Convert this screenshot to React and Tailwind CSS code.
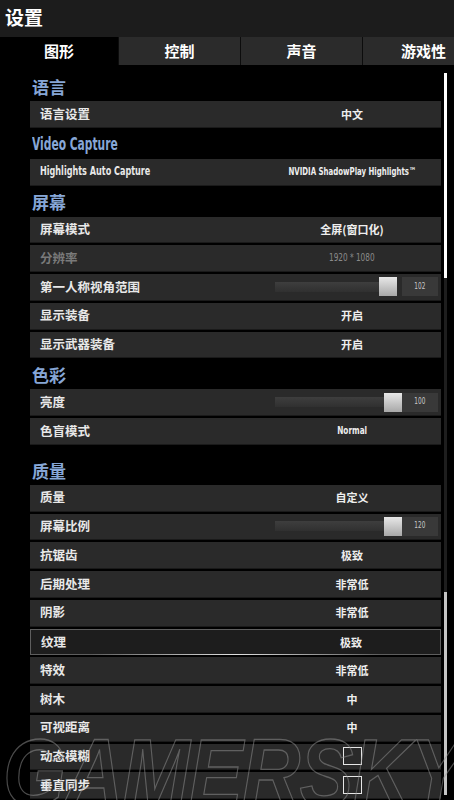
import React from "react";

const CJK = '"Noto Sans CJK SC", "Noto Sans", sans-serif';
const COND = '"Liberation Sans Narrow", "DejaVu Sans Condensed", "Roboto Condensed", "Noto Sans CJK SC", sans-serif';

function Heading({ children, tall, latin }) {
  return (
    <div
      className={`${tall ? "h-[38px] pt-[9px]" : "h-[29px]"} flex items-center pl-[2px] text-[17px] font-bold text-[#86a6d6]`}
      style={{ fontFamily: latin ? COND : CJK }}
    >
      <span className={latin ? "inline-block origin-left scale-x-[0.7] whitespace-nowrap" : ""}>{children}</span>
    </div>
  );
}

function Row({ label, children, dim, selected, latin }) {
  return (
    <div
      className={`relative mb-[2px] flex h-[26.75px] items-center ${
        selected
          ? "border border-[#5e5e5e] bg-[#1d1d1d]"
          : "border-b border-[#1a1a1a] bg-[#2a2a2a]"
      }`}
    >
      <div
        className={`flex-1 pl-[10px] text-[12.5px] font-bold ${dim ? "text-[#7a7a7a]" : "text-[#e8e8e8]"}`}
        style={{ fontFamily: latin ? COND : CJK }}
      >
        <span className={latin ? "inline-block origin-left scale-x-[0.72] whitespace-nowrap" : ""}>{label}</span>
      </div>
      <div className="flex h-full w-[178px] items-center justify-center">{children}</div>
      {selected && (
        <div className="absolute bottom-[-1px] left-[60px] right-[60px] h-px bg-gradient-to-r from-transparent via-[#e0e0e0] to-transparent" />
      )}
    </div>
  );
}

function Val({ children, dim, latin, small }) {
  return (
    <span
      className={`whitespace-nowrap ${small ? "text-[10.5px]" : "text-[11px]"} ${dim ? "font-normal text-[#8a8a8a]" : "font-bold text-[#eeeeee]"} ${latin ? "inline-block scale-x-[0.74]" : ""}`}
      style={{ fontFamily: latin ? COND : CJK }}
    >
      {children}
    </span>
  );
}

function Slider({ value, gap }) {
  return (
    <div className="flex h-full w-full items-center pl-[12px] pr-[3px]">
      <div className="h-[10px] flex-1 bg-gradient-to-b from-[#3e3e3e] to-[#303030]" />
      <div className="h-[19px] w-[18px] bg-gradient-to-b from-[#e8e8e8] to-[#a8a8a8]" />
      <div
        className={`${gap ? "ml-[5px]" : ""} flex h-[19px] w-[36px] items-center justify-center bg-[#393939] text-[8px] text-[#c8c8c8]`}
        style={{ fontFamily: COND }}
      >
        <span className="inline-block scale-x-[0.8]">{value}</span>
      </div>
    </div>
  );
}

function Check() {
  return <div className="h-[18px] w-[19px] border-[1.5px] border-[#e6e6e6]" />;
}

export default function App() {
  const tabs = ["图形", "控制", "声音", "游戏性"];
  return (
    <div className="relative h-[800px] w-[454px] overflow-hidden bg-black" style={{ fontFamily: CJK }}>
      <div className="flex h-[37px] items-center bg-[#1c1c1c] pl-[5px] pb-[3px] text-[19px] font-bold text-white">
        设置
      </div>
      <div className="flex h-[28px] overflow-hidden">
        {tabs.map((t, i) => (
          <div
            key={t}
            className={`flex h-full shrink-0 items-center justify-center text-[15px] font-bold text-white ${
              i === 0 ? "w-[118px] bg-black" : "w-[122px] border-l border-[#0c0c0c] bg-[#2b2b2b]"
            }`}
          >
            {t}
          </div>
        ))}
      </div>
      <div className="flex">
        <div className="ml-[30px] w-[411px] pt-[7px]">
          <Heading>语言</Heading>
          <Row label="语言设置"><Val>中文</Val></Row>
          <Heading latin>Video Capture</Heading>
          <Row label="Highlights Auto Capture" latin><Val latin small>NVIDIA ShadowPlay Highlights™</Val></Row>
          <Heading>屏幕</Heading>
          <Row label="屏幕模式"><Val>全屏(窗口化)</Val></Row>
          <Row label="分辨率" dim><Val dim latin>1920 * 1080</Val></Row>
          <Row label="第一人称视角范围"><Slider value="102" gap /></Row>
          <Row label="显示装备"><Val>开启</Val></Row>
          <Row label="显示武器装备"><Val>开启</Val></Row>
          <Heading>色彩</Heading>
          <Row label="亮度"><Slider value="100" /></Row>
          <Row label="色盲模式"><Val latin>Normal</Val></Row>
          <Heading tall>质量</Heading>
          <Row label="质量"><Val>自定义</Val></Row>
          <Row label="屏幕比例"><Slider value="120" /></Row>
          <Row label="抗锯齿"><Val>极致</Val></Row>
          <Row label="后期处理"><Val>非常低</Val></Row>
          <Row label="阴影"><Val>非常低</Val></Row>
          <Row label="纹理" selected><Val>极致</Val></Row>
          <Row label="特效"><Val>非常低</Val></Row>
          <Row label="树木"><Val>中</Val></Row>
          <Row label="可视距离"><Val>中</Val></Row>
          <Row label="动态模糊"><Check /></Row>
          <Row label="垂直同步"><Check /></Row>
        </div>
        <div className="ml-[3px] flex w-[3px] flex-col pt-[8px]">
          <div className="h-[205px] bg-white" />
          <div className="h-[314px] bg-[#1e1e1e]" />
          <div className="h-[203px] bg-[#c4c4c4]" />
        </div>
      </div>
      <div
        className="pointer-events-none absolute left-[3px] top-[726px] origin-top-left scale-x-[0.86] whitespace-nowrap text-[94px] font-bold italic leading-none tracking-[-1px] text-transparent"
        style={{ fontFamily: '"Liberation Sans", sans-serif', WebkitTextStroke: "1.3px rgba(150,150,150,0.5)" }}
      >
        GAMERSKY
      </div>
    </div>
  );
}
